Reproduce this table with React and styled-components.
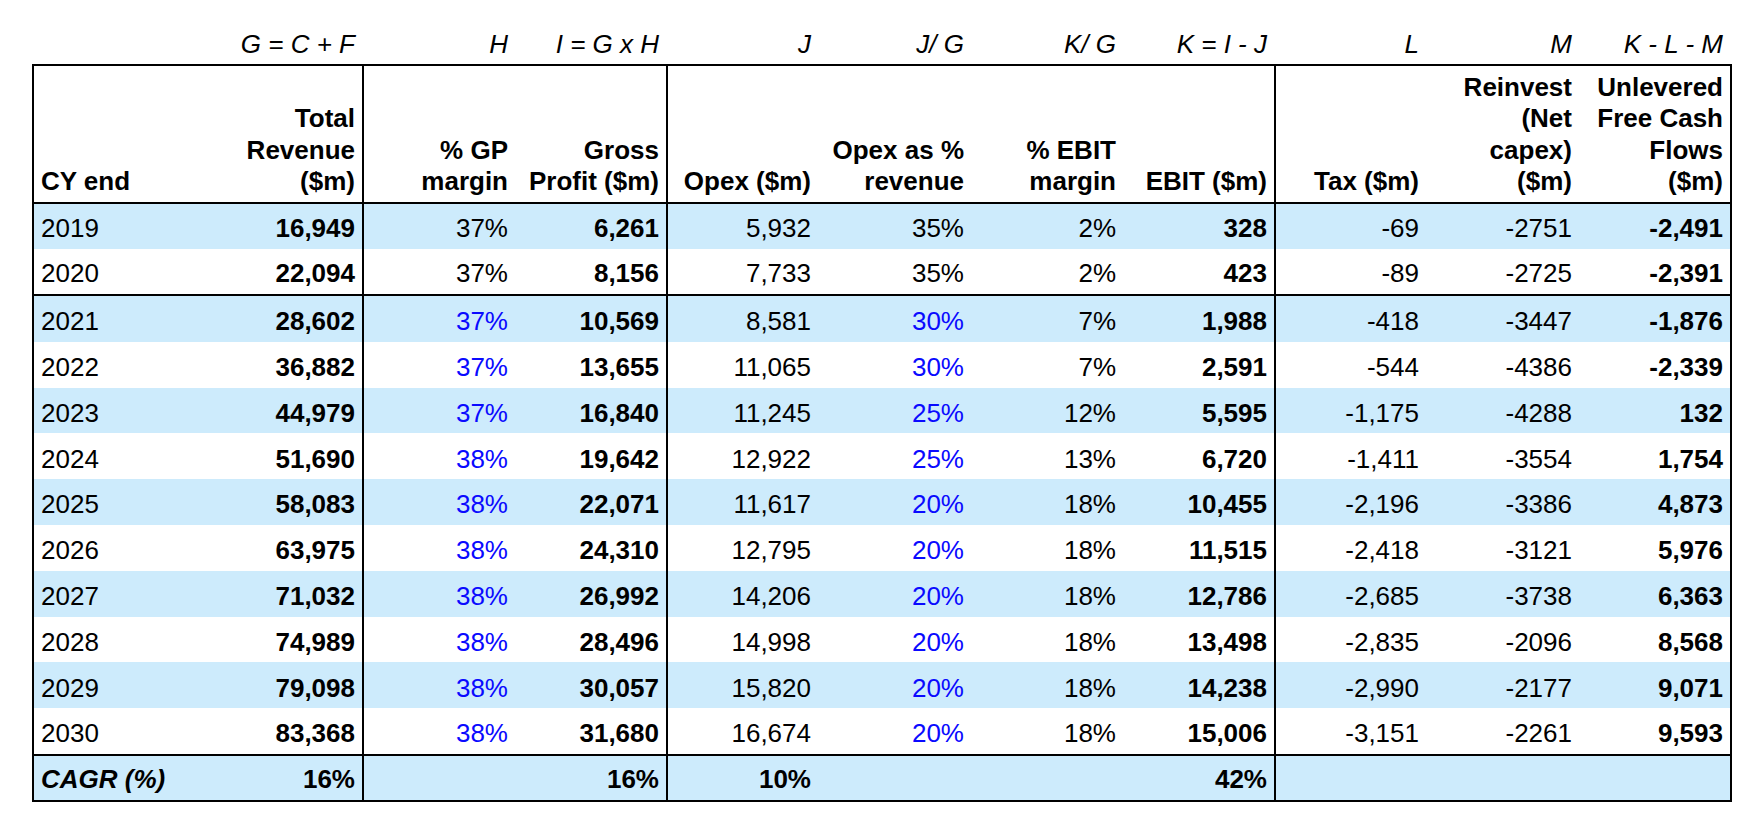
import React from "react";
import styled, { createGlobalStyle } from "styled-components";

const COLS = "177px 151px 153px 151px 152px 153px 152px 151px 152px 153px 151px";
const SEPS = [2, 4, 8];
const BAND = "#cdebfc";
const INPUT_BLUE = "#0a0aff";

const Global = createGlobalStyle`
  html, body { margin: 0; padding: 0; background: #fff; }
  body { font-family: "Liberation Sans", Arial, sans-serif; font-size: 26px; color: #000; }
`;

const Page = styled.div`
  padding-left: 32px;
  width: 1700px;
`;

const FormulaRow = styled.div`
  display: grid;
  grid-template-columns: ${COLS};
  height: 64px;
  padding-left: 2px;
  align-items: end;
`;

const Formula = styled.div`
  box-sizing: border-box;
  font-style: italic;
  text-align: right;
  line-height: 31.6px;
  padding: 0 7px 3px;
  border-left: ${(p) => (p.$sep ? "2px solid transparent" : "none")};
  white-space: nowrap;
`;

const Sheet = styled.div`
  border: 2px solid #000;
  width: 1696px;
`;

const Row = styled.div`
  display: grid;
  grid-template-columns: ${COLS};
  height: ${(p) => p.$h}px;
  background: ${(p) => (p.$band ? BAND : "#fff")};
  border-top: ${(p) => (p.$rule ? "2px solid #000" : "none")};
`;

const Cell = styled.div`
  box-sizing: border-box;
  display: flex;
  align-items: flex-end;
  justify-content: ${(p) => (p.$left ? "flex-start" : "flex-end")};
  text-align: ${(p) => (p.$left ? "left" : "right")};
  padding: 0 7px 4px;
  line-height: 31.6px;
  white-space: nowrap;
  font-weight: ${(p) => (p.$bold ? 700 : 400)};
  font-style: ${(p) => (p.$italic ? "italic" : "normal")};
  color: ${(p) => (p.$blue ? INPUT_BLUE : "#000")};
  border-left: ${(p) => (p.$sep ? "2px solid #000" : "none")};
`;

const formulas = ["", "G = C + F", "H", "I = G x H", "J", "J/ G", "K/ G", "K = I - J", "L", "M", "K - L - M"];

const headers = [
  ["CY end"],
  ["Total", "Revenue", "($m)"],
  ["% GP", "margin"],
  ["Gross", "Profit ($m)"],
  ["Opex ($m)"],
  ["Opex as %", "revenue"],
  ["% EBIT", "margin"],
  ["EBIT ($m)"],
  ["Tax ($m)"],
  ["Reinvest", "(Net", "capex)", "($m)"],
  ["Unlevered", "Free Cash", "Flows", "($m)"],
];

const data = [
  ["2019", "16,949", "37%", "6,261", "5,932", "35%", "2%", "328", "-69", "-2751", "-2,491"],
  ["2020", "22,094", "37%", "8,156", "7,733", "35%", "2%", "423", "-89", "-2725", "-2,391"],
  ["2021", "28,602", "37%", "10,569", "8,581", "30%", "7%", "1,988", "-418", "-3447", "-1,876"],
  ["2022", "36,882", "37%", "13,655", "11,065", "30%", "7%", "2,591", "-544", "-4386", "-2,339"],
  ["2023", "44,979", "37%", "16,840", "11,245", "25%", "12%", "5,595", "-1,175", "-4288", "132"],
  ["2024", "51,690", "38%", "19,642", "12,922", "25%", "13%", "6,720", "-1,411", "-3554", "1,754"],
  ["2025", "58,083", "38%", "22,071", "11,617", "20%", "18%", "10,455", "-2,196", "-3386", "4,873"],
  ["2026", "63,975", "38%", "24,310", "12,795", "20%", "18%", "11,515", "-2,418", "-3121", "5,976"],
  ["2027", "71,032", "38%", "26,992", "14,206", "20%", "18%", "12,786", "-2,685", "-3738", "6,363"],
  ["2028", "74,989", "38%", "28,496", "14,998", "20%", "18%", "13,498", "-2,835", "-2096", "8,568"],
  ["2029", "79,098", "38%", "30,057", "15,820", "20%", "18%", "14,238", "-2,990", "-2177", "9,071"],
  ["2030", "83,368", "38%", "31,680", "16,674", "20%", "18%", "15,006", "-3,151", "-2261", "9,593"],
];

const BOLD_COLS = [1, 3, 7, 10];
const BLUE_COLS = [2, 5];

const cagr = ["CAGR (%)", "16%", "", "16%", "10%", "", "", "42%", "", "", ""];

export default function App() {
  return (
    <>
      <Global />
      <Page>
        <FormulaRow>
          {formulas.map((f, i) => (
            <Formula key={i} $sep={SEPS.includes(i)}>
              {f}
            </Formula>
          ))}
        </FormulaRow>
        <Sheet>
          <Row $h={136}>
            {headers.map((lines, i) => (
              <Cell key={i} $bold $left={i === 0} $sep={SEPS.includes(i)}>
                <div>
                  {lines.map((l, j) => (
                    <React.Fragment key={j}>
                      {j > 0 && <br />}
                      {l}
                    </React.Fragment>
                  ))}
                </div>
              </Cell>
            ))}
          </Row>
          {data.map((row, r) => {
            const early = r < 2;
            return (
              <Row key={r} $h={early ? 45 : 45.8} $band={r % 2 === 0} $rule={r === 0 || r === 2}>
                {row.map((v, i) => (
                  <Cell
                    key={i}
                    $left={i === 0}
                    $sep={SEPS.includes(i)}
                    $bold={BOLD_COLS.includes(i)}
                    $blue={!early && BLUE_COLS.includes(i)}
                  >
                    {v}
                  </Cell>
                ))}
              </Row>
            );
          })}
          <Row $h={44} $band $rule>
            {cagr.map((v, i) => (
              <Cell key={i} $left={i === 0} $sep={SEPS.includes(i)} $bold $italic={i === 0}>
                {v}
              </Cell>
            ))}
          </Row>
        </Sheet>
      </Page>
    </>
  );
}
